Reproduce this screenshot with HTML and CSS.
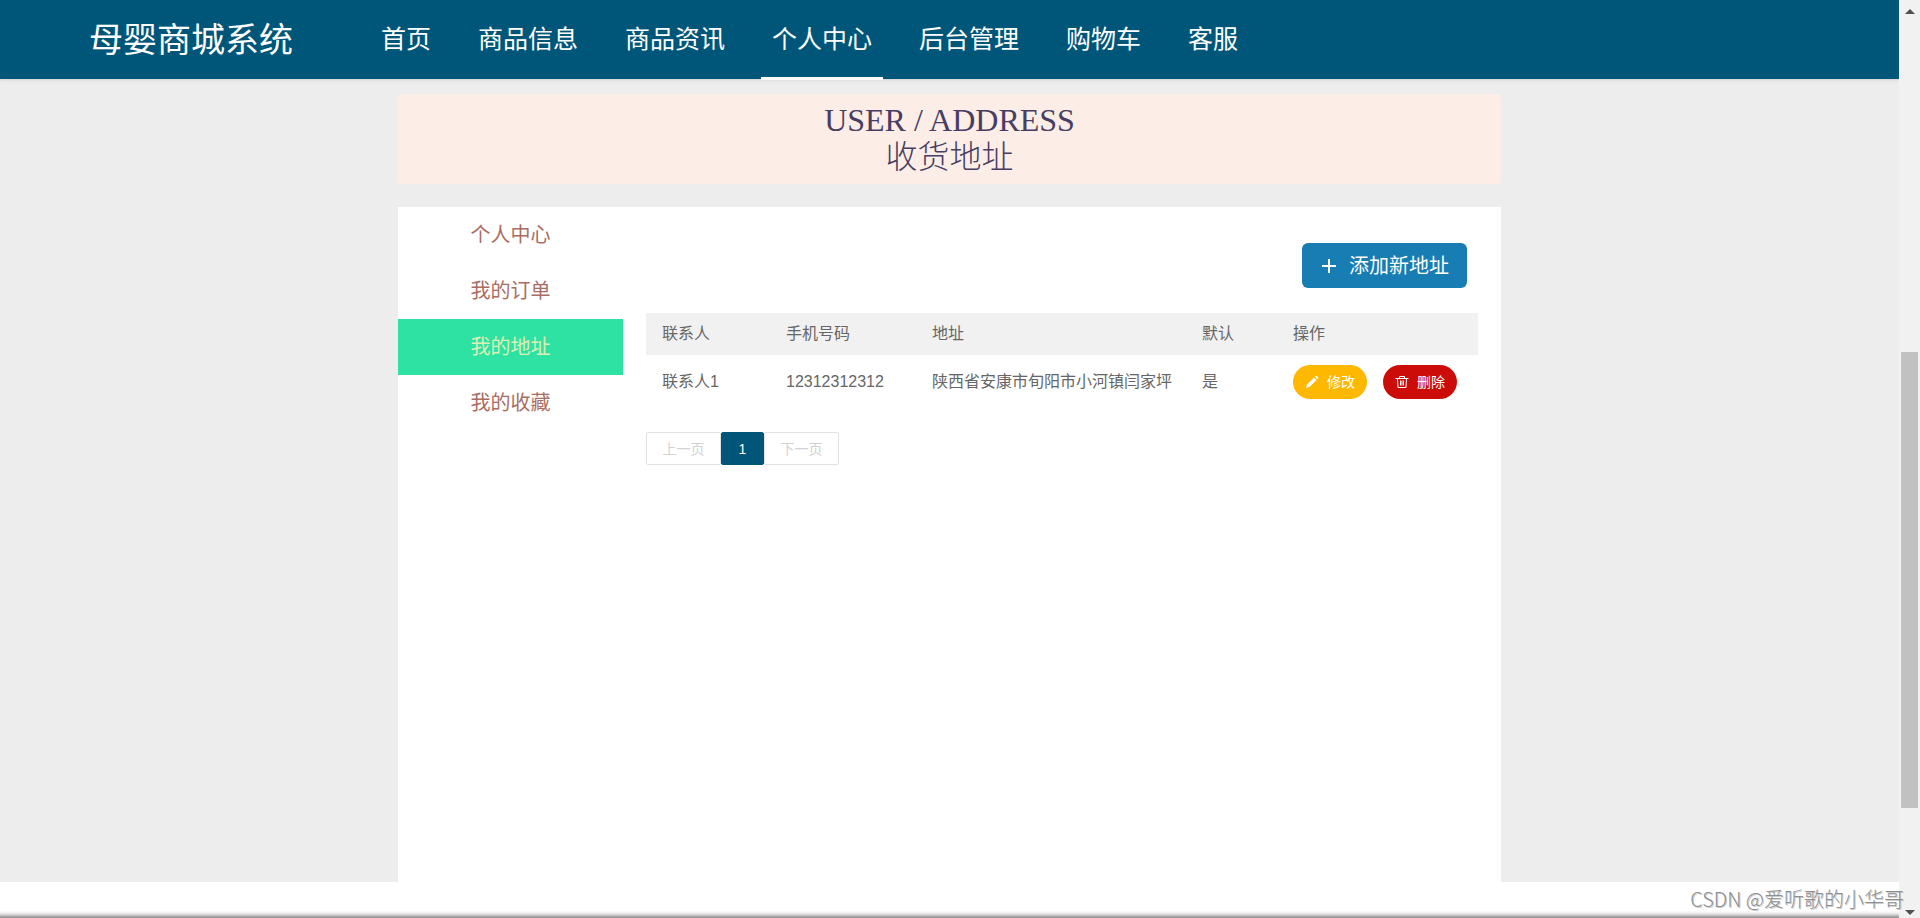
FILE: index.html
```html
<!DOCTYPE html>
<html lang="zh-CN">
<head>
<meta charset="utf-8">
<title>母婴商城系统</title>
<link rel="stylesheet" href="styles.css">
</head>
<body>
<div class="page">
  <header class="header">
    <a class="logo" href="#">母婴商城系统</a>
    <nav class="nav">
      <a href="#">首页</a>
      <a href="#">商品信息</a>
      <a href="#">商品资讯</a>
      <a class="active" href="#">个人中心</a>
      <a href="#">后台管理</a>
      <a href="#">购物车</a>
      <a href="#">客服</a>
    </nav>
  </header>
  <main class="main">
    <h1 class="banner"><span>USER / ADDRESS</span><span class="banner-cn">收货地址</span></h1>
    <div class="panel">
      <nav class="side">
        <a href="#">个人中心</a>
        <a href="#">我的订单</a>
        <a class="active" href="#">我的地址</a>
        <a href="#">我的收藏</a>
      </nav>
      <section class="content">
        <div class="toolbar">
          <button class="add" type="button">
            <svg width="16" height="16" viewBox="0 0 16 16" aria-hidden="true"><path d="M8 1v14M1 8h14" stroke="currentColor" stroke-width="2" fill="none"/></svg>
            添加新地址
          </button>
        </div>
        <table class="table">
          <colgroup><col class="c-name"><col class="c-phone"><col class="c-addr"><col class="c-def"><col></colgroup>
          <thead>
            <tr><th>联系人</th><th>手机号码</th><th>地址</th><th>默认</th><th>操作</th></tr>
          </thead>
          <tbody>
            <tr>
              <td>联系人1</td><td>12312312312</td><td>陕西省安康市旬阳市小河镇闫家坪</td><td>是</td>
              <td>
                <div class="actions">
                  <button class="pill edit" type="button">
                    <svg width="14" height="14" viewBox="0 0 14 14" aria-hidden="true"><path d="M1 13l1-3.600L9 2.400l2.600 2.600L4.600 12zM9.800 1.600l.6-.6q.8-.6 1.600.1l.9.9q.7.800.1 1.600l-.6.6z" fill="currentColor"/></svg>
                    修改
                  </button>
                  <button class="pill remove" type="button">
                    <svg width="14" height="14" viewBox="0 0 14 14" fill="none" stroke="currentColor" aria-hidden="true"><path d="M.5 3.500h13M4.500 3.500v-2h5v2M2.500 3.500l.5 9h8l.5-9M5.500 5.500v5M7 5.500v5M8.500 5.500v5"/></svg>
                    删除
                  </button>
                </div>
              </td>
            </tr>
          </tbody>
        </table>
        <div class="pager">
          <button type="button" disabled>上一页</button>
          <button class="current" type="button">1</button>
          <button type="button" disabled>下一页</button>
        </div>
      </section>
    </div>
  </main>
  <footer class="footer"></footer>
</div>
<div class="scrollbar" aria-hidden="true">
  <span class="arrow up"></span>
  <span class="track"><span class="thumb"></span></span>
  <span class="arrow down"></span>
</div>
<div class="watermark">CSDN @爱听歌的小华哥</div>
</body>
</html>
```
FILE: styles.css
```css
* { box-sizing: border-box; }

body {
  margin: 0;
  display: flex;
  min-height: 100vh;
  background: #ededed;
  color: #666;
  font: 16px/24px "Liberation Sans", "Noto Sans CJK SC", sans-serif;
}

a { color: inherit; text-decoration: none; }
button { font: inherit; border: 0; padding: 0; cursor: pointer; }

.page { flex: 1; display: flex; flex-direction: column; }

.header {
  display: flex;
  align-items: center;
  height: 79px;
  padding-left: 89px;
  background: #005679;
  color: #fff;
  box-shadow: 0 1px 3px rgba(0, 0, 0, .12);
}
.logo { font-size: 34px; line-height: 80px; }
.nav { display: flex; gap: 25px; margin-left: 77px; }
.nav a {
  height: 80px;
  padding: 0 11px 3px;
  font-size: 25px;
  line-height: 78px;
}
.nav .active { border-bottom: 3px solid #fff; padding-bottom: 0; }

.main {
  flex: 1;
  display: flex;
  flex-direction: column;
  gap: 23px;
  width: 100%;
  max-width: 1103px;
  margin: 0 auto;
  padding-top: 15px;
}

.banner {
  display: flex;
  flex-direction: column;
  align-items: center;
  margin: 0;
  padding: 8px 0;
  border-radius: 4px;
  background: #fceee6;
  color: #483d63;
  font: 400 32px/37px "Liberation Serif", "Noto Sans CJK SC", serif;
}
.banner-cn { font-weight: 300; }

.panel { flex: 1; display: flex; background: #fff; }

.side { width: 225px; }
.side a {
  display: block;
  font-size: 20px;
  line-height: 56px;
  text-align: center;
  color: #a96d64;
}
.side .active { background: #2ee2a4; color: #dcf0b4; }

.content { flex: 1; padding: 36px 23px 0; }
.toolbar { display: flex; justify-content: flex-end; padding-right: 11px; margin-bottom: 25px; }
.add {
  display: flex;
  align-items: center;
  gap: 12px;
  height: 45px;
  padding: 0 18px 0 19px;
  border-radius: 6px;
  background: #187db3;
  color: #fff;
  font-size: 20px;
}

.table { width: 100%; border-collapse: collapse; table-layout: fixed; }
.table th { height: 42px; padding: 0 0 0 16px; background: #f1f1f1; text-align: left; font-weight: 400; }
.table td { height: 53px; padding: 0 0 0 16px; }
.c-name { width: 124px; }
.c-phone { width: 146px; }
.c-addr { width: 270px; }
.c-def { width: 91px; }

.actions { display: flex; gap: 16px; }
.pill {
  display: flex;
  align-items: center;
  justify-content: center;
  gap: 8px;
  width: 74px;
  height: 34px;
  border-radius: 17px;
  color: #fff;
  font-size: 14px;
}
.edit { background: #ffb800; }
.remove { background: #cc0c08; }

.pager { display: flex; margin-top: 24px; font-size: 14px; }
.pager button {
  width: 75px;
  height: 33px;
  border: 1px solid #e2e2e2;
  border-radius: 2px;
  background: #fff;
  color: #d2d2d2;
}
.pager .current { width: 43px; border-color: #005679; background: #005679; color: #fff; }

.footer {
  height: 36px;
  background: linear-gradient(#fff 80%, #e8e8e8 88%, #8c8a8a);
}

.scrollbar {
  display: flex;
  flex-direction: column;
  align-items: center;
  width: 21px;
  padding: 9px 0 3px;
  background: #f1f1f1;
}
.arrow { border: 5px solid transparent; }
.up { border-top: 0; border-bottom-color: #505050; }
.down { border-bottom: 0; border-top-color: #505050; }
.track { flex: 1; width: 17px; padding-top: 338px; }
.thumb { display: block; height: 456px; background: #c1c1c1; }

.watermark {
  position: absolute;
  right: 16px;
  bottom: 7px;
  color: #8e8e8e;
  font: 300 20px/24px "Noto Sans CJK SC", sans-serif;
  text-shadow: 1px 1px 0 rgba(120, 120, 120, .4);
}
```
